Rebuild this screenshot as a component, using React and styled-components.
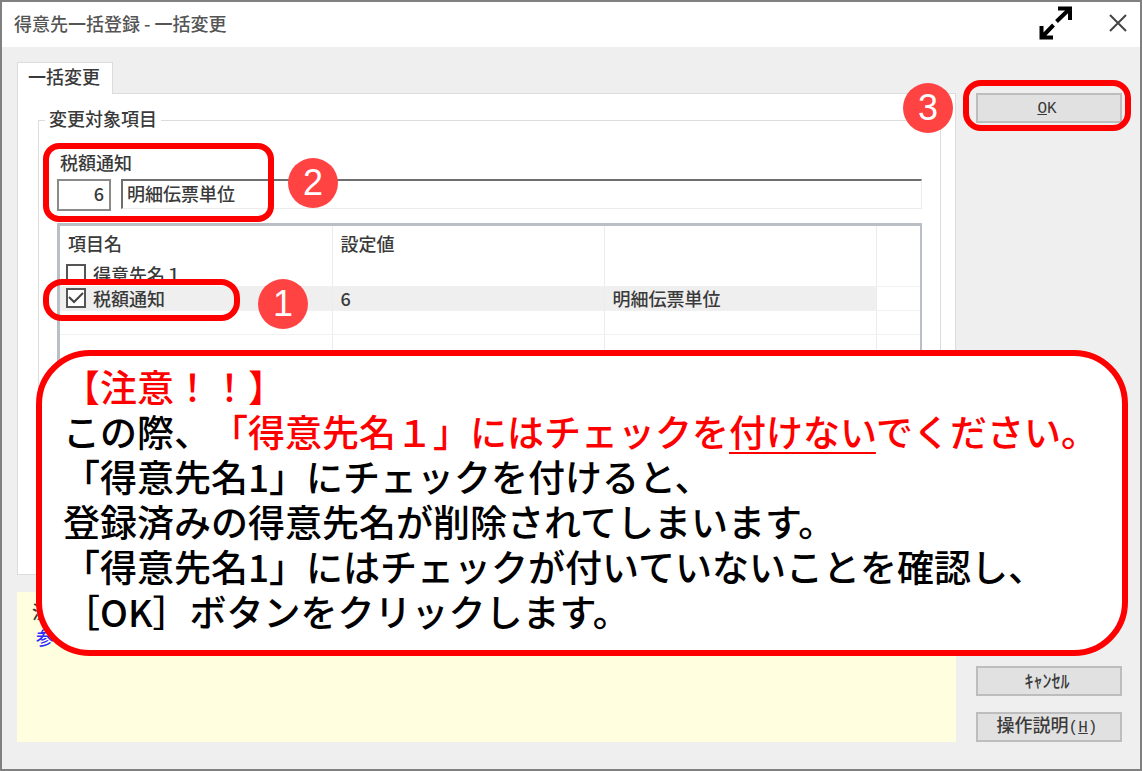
import React, {useState} from 'react';
import styled, {createGlobalStyle} from 'styled-components';

const GlobalStyle = createGlobalStyle`
  * {
    box-sizing: border-box;
  }

  body {
    margin: 0;
  }

  body, button, input {
    font-family: "Noto Sans CJK JP", sans-serif;
    font-size: 18px;
    font-weight: 500;
    line-height: 20px;
    color: #3a3a3a;
  }
`;

const Dialog = styled.div`
  position: relative;
  display: flex;
  flex-direction: column;
  min-height: 100vh;
  border: 2px solid #808080;
  background-color: #efefef;
`;

const TitleBar = styled.header`
  display: flex;
  align-items: center;
  gap: 36px;
  height: 45px;
  padding: 0 13px 4px 12px;
  background-color: white;
`;

const Title = styled.h1`
  flex: 1;
  margin: 0;
  font-size: 18px;
  font-weight: 500;
  color: #555;
`;

const IconButton = styled.button`
  display: flex;
  padding: 0;
  border: none;
  background: none;
`;

const Body = styled.div`
  flex: 1;
  display: flex;
  gap: 20px;
  padding: 15px 18px 27px 15px;
`;

const Main = styled.main`
  flex: 1;
  min-width: 0;
  display: flex;
  flex-direction: column;
`;

const Tab = styled.button`
  align-self: flex-start;
  height: 32px;
  margin-bottom: -1px;
  padding: 0 12px 6px 10px;
  border: 1px solid #dcdcdc;
  border-bottom: none;
  background-color: white;
  z-index: 1;
`;

const TabPanel = styled.div`
  flex: 1;
  display: flex;
  padding: 14px 14px 16px 20px;
  border: 1px solid #dcdcdc;
  background-color: white;
`;

const Group = styled.fieldset`
  flex: 1;
  min-width: 0;
  display: flex;
  flex-direction: column;
  margin: 0;
  padding: 20px 18px 14px;
  border: 1px solid #dcdcdc;
`;

const Legend = styled.legend`
  margin-left: -12px;
  padding: 0 4px 4px;
`;

const Field = styled.div`
  position: relative;
  display: grid;
  grid-template-columns: 54px 1fr;
  gap: 7px 10px;
  margin-bottom: 12px;
`;

const FieldLabel = styled.label`
  grid-column: 1 / -1;
  padding-left: 3px;
`;

const CodeInput = styled.input`
  min-width: 0;
  height: 32px;
  padding: 0 5px 4px;
  border: 2px solid #8a8a8a;
  background-color: white;
  text-align: right;
`;

const NameInput = styled.input`
  min-width: 0;
  height: 30px;
  padding: 0 4px 4px;
  border: 1px solid #ececec;
  border-top: 2px solid #6e6e6e;
  border-left: 2px solid #6e6e6e;
  background-color: white;
`;

const TableFrame = styled.div`
  flex: 1;
  border: 3px solid #b9bfc4;
  border-right-width: 2px;
`;

const ItemTable = styled.table`
  width: 100%;
  table-layout: fixed;
  border-collapse: collapse;

  th, td {
    padding: 0 8px;
    border-right: 1px solid #ececec;
    font-weight: 500;
    text-align: left;
    white-space: nowrap;
  }

  th {
    height: 36px;
    padding-bottom: 2px;
  }

  td {
    height: 24px;
    border-bottom: 1px solid #f1f1f1;
  }

  th:last-child, td:last-child {
    border-right: none;
  }

  td:first-child {
    padding-left: 6px;
  }
`;

const Column = styled.col`
  width: ${(props) => props.$width};
`;

const ItemRow = styled.tr`
  td:not(:last-child) {
    background-color: ${(props) => (props.$selected ? '#efefef' : 'white')};
  }
`;

const CheckLabel = styled.label`
  position: relative;
  display: flex;
  align-items: center;
  gap: 7px;
`;

const CheckBox = styled.input`
  appearance: none;
  width: 20px;
  height: 20px;
  margin: 0;
  border: 2px solid #555;
  background-color: white;
`;

const CheckMark = styled.svg`
  position: absolute;
  left: 0;
  top: 0;
  pointer-events: none;
`;

const Notes = styled.div`
  height: 150px;
  margin-top: 17px;
  padding: 6px 15px;
  background-color: #ffffe0;
`;

const NoteLine = styled.p`
  margin: 0;
  padding-left: ${(props) => (props.$link ? '4px' : '0')};
  line-height: 26px;
  color: ${(props) => (props.$link ? '#2b2bff' : '#3a3a3a')};
`;

const Side = styled.aside`
  width: 146px;
  display: flex;
  flex-direction: column;
  gap: 16px;
  padding-top: 31px;
`;

const OkArea = styled.div`
  position: relative;
  display: flex;
  margin-bottom: auto;
`;

const PushButton = styled.button`
  flex: none;
  width: 100%;
  height: 30px;
  padding: 0 4px 2px 0;
  border: 2px solid #bdbdbd;
  background-color: #e1e1e1;
`;

const Narrow = styled.span`
  font-family: "Liberation Mono", monospace;
  font-size: 16px;
`;

const Ring = styled.div`
  position: absolute;
  inset: ${(props) => props.$inset};
  width: ${(props) => props.$width};
  border: 6px solid red;
  border-radius: ${(props) => props.$radius};
  pointer-events: none;
`;

const Badge = styled.span`
  position: absolute;
  left: ${(props) => props.$left};
  top: ${(props) => props.$top};
  width: 50px;
  height: 50px;
  border-radius: 50%;
  background-color: #ff4343;
  color: white;
  font-family: "Liberation Sans", sans-serif;
  font-size: 36px;
  font-weight: normal;
  line-height: 50px;
  text-align: center;
`;

const Callout = styled.section`
  position: absolute;
  left: 34px;
  right: 12px;
  top: 348px;
  padding: 8px 0 16px 21px;
  border: 6px solid red;
  border-radius: 54px;
  background-color: white;
  color: black;
  font-size: 37px;
  font-weight: 500;
  line-height: 45px;
  white-space: nowrap;
  text-spacing-trim: space-all;
  z-index: 2;

  p {
    margin: 0;
  }
`;

const Warn = styled.span`
  color: red;

  u {
    text-decoration-thickness: 2px;
    text-underline-offset: 5px;
  }
`;

const ITEMS = [
  {name: '得意先名１', code: '', value: ''},
  {name: '税額通知', code: '6', value: '明細伝票単位'},
];

const EMPTY_ROWS = [1, 2, 3, 4];

function App() {

  const [checked, setChecked] = useState(['税額通知']);
  const [code, setCode] = useState('6');
  const [name, setName] = useState('明細伝票単位');

  const toggle = (item) => {
    setChecked(checked.includes(item) ? checked.filter((c) => c !== item) : [...checked, item]);
  };

  return (
    <>
      <GlobalStyle />
      <Dialog>
        <TitleBar>
          <Title>得意先一括登録 - 一括変更</Title>
          <IconButton aria-label="拡大">
            <svg width="34" height="34" viewBox="0 0 34 34" fill="none" stroke="black" strokeWidth="4">
              <path d="M19 2.5H31V14M30.5 3L17.5 15.5" />
              <path d="M2.5 20V31.5H14M3 31L14.5 19" />
            </svg>
          </IconButton>
          <IconButton aria-label="閉じる">
            <svg width="18" height="18" viewBox="0 0 18 18" fill="none" stroke="#444" strokeWidth="2">
              <path d="M1 1L17 17M17 1L1 17" />
            </svg>
          </IconButton>
        </TitleBar>

        <Body>
          <Main>
            <Tab>一括変更</Tab>
            <TabPanel>
              <Group>
                <Legend>変更対象項目</Legend>
                <Field>
                  <FieldLabel htmlFor="code">税額通知</FieldLabel>
                  <CodeInput id="code" value={code} onChange={(e) => setCode(e.target.value)} />
                  <NameInput aria-label="税額通知の名称" value={name} onChange={(e) => setName(e.target.value)} />
                  <Ring $inset="-9px auto -11px -14px" $width="231px" $radius="16px" />
                  <Badge $left="231px" $top="6px">2</Badge>
                </Field>

                <TableFrame>
                  <ItemTable>
                    <colgroup>
                      <Column $width="272px" />
                      <Column $width="272px" />
                      <Column $width="272px" />
                      <Column $width="auto" />
                    </colgroup>
                    <thead>
                      <tr>
                        <th>項目名</th>
                        <th>設定値</th>
                        <th></th>
                        <th></th>
                      </tr>
                    </thead>
                    <tbody>
                      {ITEMS.map((item) => (
                        <ItemRow key={item.name} $selected={item.code !== ''}>
                          <td>
                            <CheckLabel>
                              <CheckBox
                                type="checkbox"
                                checked={checked.includes(item.name)}
                                onChange={() => toggle(item.name)}
                              />
                              {checked.includes(item.name) && (
                                <CheckMark width="20" height="20" viewBox="0 0 20 20" fill="none" stroke="#444" strokeWidth="2">
                                  <path d="M3 9L8 14L17 5" />
                                </CheckMark>
                              )}
                              {item.name}
                              {item.code && (
                                <>
                                  <Ring $inset="-9px auto -13px -23px" $width="197px" $radius="19px" />
                                  <Badge $left="192px" $top="-9px">1</Badge>
                                </>
                              )}
                            </CheckLabel>
                          </td>
                          <td>{item.code}</td>
                          <td>{item.value}</td>
                          <td></td>
                        </ItemRow>
                      ))}
                      {EMPTY_ROWS.map((row) => (
                        <ItemRow key={row}>
                          <td></td>
                          <td></td>
                          <td></td>
                          <td></td>
                        </ItemRow>
                      ))}
                    </tbody>
                  </ItemTable>
                </TableFrame>
              </Group>
            </TabPanel>

            <Notes>
              <NoteLine>注</NoteLine>
              <NoteLine $link>参</NoteLine>
            </Notes>
          </Main>

          <Side>
            <OkArea>
              <PushButton><Narrow><u>O</u>K</Narrow></PushButton>
              <Ring $inset="-13px -9px -8px -13px" $radius="18px" />
              <Badge $left="-73px" $top="-10px">3</Badge>
            </OkArea>
            <PushButton>ｷｬﾝｾﾙ</PushButton>
            <PushButton>操作説明<Narrow>(<u>H</u>)</Narrow></PushButton>
          </Side>
        </Body>

        <Callout>
          <p><Warn>【注意！！】</Warn></p>
          <p>この際、<Warn>「得意先名１」にはチェックを<u>付けない</u>でください。</Warn></p>
          <p>「得意先名1」にチェックを付けると、</p>
          <p>登録済みの得意先名が削除されてしまいます。</p>
          <p>「得意先名1」にはチェックが付いていないことを確認し、</p>
          <p>［OK］ボタンをクリックします。</p>
        </Callout>
      </Dialog>
    </>
  );
}

export default App;
